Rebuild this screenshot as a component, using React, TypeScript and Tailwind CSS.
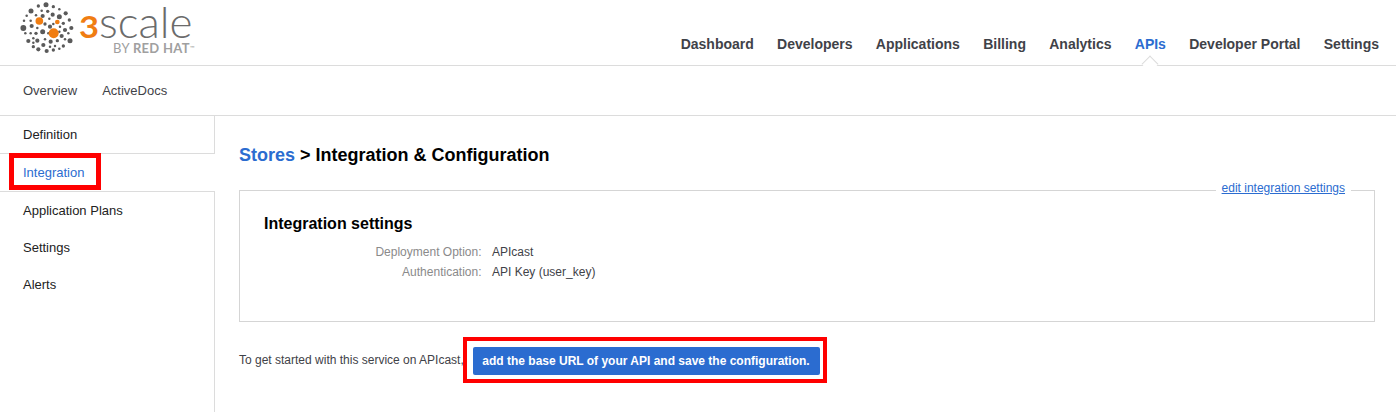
const nav = ["Dashboard", "Developers", "Applications", "Billing", "Analytics", "APIs", "Developer Portal", "Settings"];

const dots: [number, number, number][] = [
  [138, 14, 6], [115, 18, 4], [160, 20, 4], [178, 28, 3], [93, 33, 6], [197, 40, 5], [80, 47, 3], [208, 60, 4],
  [72, 62, 3], [214, 84, 5], [70, 84, 7], [205, 100, 3], [76, 100, 3], [210, 122, 6], [85, 123, 5], [190, 138, 4],
  [100, 128, 3], [115, 148, 5], [140, 153, 5], [160, 150, 4], [178, 146, 3], [100, 140, 4], [125, 32, 3], [143, 34, 4],
  [158, 44, 5], [178, 50, 6], [108, 46, 3], [92, 62, 3], [148, 56, 3], [128, 48, 5], [190, 70, 4], [95, 78, 5],
  [112, 84, 3], [135, 72, 4], [150, 80, 5], [128, 95, 6], [108, 100, 4], [92, 100, 3], [195, 90, 5], [180, 80, 3],
  [160, 72, 3], [185, 108, 5], [172, 122, 4], [152, 125, 5], [135, 118, 3], [112, 122, 5], [100, 115, 3], [130, 135, 5],
  [150, 140, 3], [165, 138, 3], [195, 118, 3], [178, 95, 3], [145, 100, 3],
];

function Logo() {
  return (
    <div className="relative h-[65px] w-[210px] shrink-0">
      <svg className="absolute left-0 top-0" width="220" height="65" viewBox="0 0 660 195">
        {dots.map(([x, y, r], i) => (
          <circle key={i} cx={x} cy={y} r={r * 1.25} fill="#5a5a5a" />
        ))}
        <circle cx="118" cy="63" r="11.5" fill="#f07d12" />
        <circle cx="172" cy="66" r="7" fill="#f07d12" />
        <circle cx="161" cy="100" r="15" fill="#f07d12" />
      </svg>
      <div className="absolute left-[79px] top-0 flex items-baseline text-[44px] leading-[42px] font-['Lato',sans-serif] font-light text-[#6b6b6b]">
        <span className="mr-[2.6px] inline-block origin-left scale-x-[1.15] text-[30px] font-bold text-[#f07d12]">3</span>
        <span>scale</span>
      </div>
      <div className="absolute left-[113px] top-[41px] text-[13px] leading-[14px] font-['Lato',sans-serif] tracking-[0.3px] text-[#a0a0a0]">
        BY <span className="font-bold">RED HAT</span>
        <span className="text-[6px] align-top">™</span>
      </div>
    </div>
  );
}

export default function App() {
  return (
    <div className="relative h-[412px] w-[1396px] overflow-hidden bg-white font-['Liberation_Sans',Arial,sans-serif] text-[13px] text-[#3f4248]">
      <header className="relative flex h-[66px] justify-between border-b border-[#dcdcdc]">
        <Logo />
        <nav className="flex items-start gap-[23.3px] pr-[17px] pt-[36px] text-[14px] font-bold leading-[16px]">
          {nav.map((n) => (
            <a key={n} className={n === "APIs" ? "text-[#2b6cd0]" : "text-[#3f4248]"}>
              {n}
            </a>
          ))}
        </nav>
        <div className="absolute left-[1144px] top-[58px] h-[12px] w-[12px] rotate-45 border-l border-t border-[#dcdcdc] bg-white" />
      </header>

      <div className="flex h-[50px] items-center gap-[25px] border-b border-[#dcdcdc] pl-[23px]">
        <a>Overview</a>
        <a>ActiveDocs</a>
      </div>

      <div className="flex h-[296px]">
        <aside className="relative w-[215px] shrink-0 border-r border-[#dcdcdc] text-[#222222]">
          <div className="flex h-[38px] items-center border-b border-[#dcdcdc] pl-[23px]">Definition</div>
          <div className="-mr-px flex h-[38px] items-center border-b border-[#dcdcdc] bg-white pl-[23px] text-[#2b6cd0]">
            <span className="relative z-10">Integration</span>
          </div>
          <div className="flex h-[37px] items-center pl-[23px]">Application Plans</div>
          <div className="flex h-[37px] items-center pl-[23px]">Settings</div>
          <div className="flex h-[37px] items-center pl-[23px]">Alerts</div>
          <div className="absolute left-[9px] top-[37px] h-[37px] w-[92px] border-[5px] border-[#ff0000]" />
        </aside>

        <main className="flex-1 pl-[24px] pr-[21px]">
          <h1 className="mt-[28px] text-[18px] font-bold leading-[22px] text-black">
            <span className="text-[#2b6cd0]">Stores</span> &gt; Integration &amp; Configuration
          </h1>

          <section className="relative mt-[24px] h-[132px] border border-[#d5d5d5] pl-[24px] pt-[23px]">
            <a className="absolute right-[23px] top-[-12px] bg-white px-[6px] text-[12px] leading-[18px] text-[#2b6cd0] underline">
              edit integration settings
            </a>
            <h2 className="text-[16px] font-bold leading-[20px] text-black">Integration settings</h2>
            <dl className="mt-[8px] grid grid-cols-[217.5px_1fr] gap-x-[10.5px] text-[12px] leading-[20px]">
              <dt className="text-right text-[#8a8a8a]">Deployment Option:</dt>
              <dd>APIcast</dd>
              <dt className="text-right text-[#8a8a8a]">Authentication:</dt>
              <dd>API Key (user_key)</dd>
            </dl>
          </section>

          <div className="mt-[15px] flex items-center text-[12px]">
            <span className="w-[224px] shrink-0 whitespace-nowrap">To get started with this service on APIcast,</span>
            <div className="border-[4.5px] border-[#ff0000] pb-[4px] pl-[5.5px] pr-[3px] pt-[6px]">
              <button className="flex h-[28px] w-[347px] items-center justify-center rounded-[2px] bg-[#2b6cd0] text-[12px] font-bold text-white">
                add the base URL of your API and save the configuration.
              </button>
            </div>
          </div>
        </main>
      </div>
    </div>
  );
}
